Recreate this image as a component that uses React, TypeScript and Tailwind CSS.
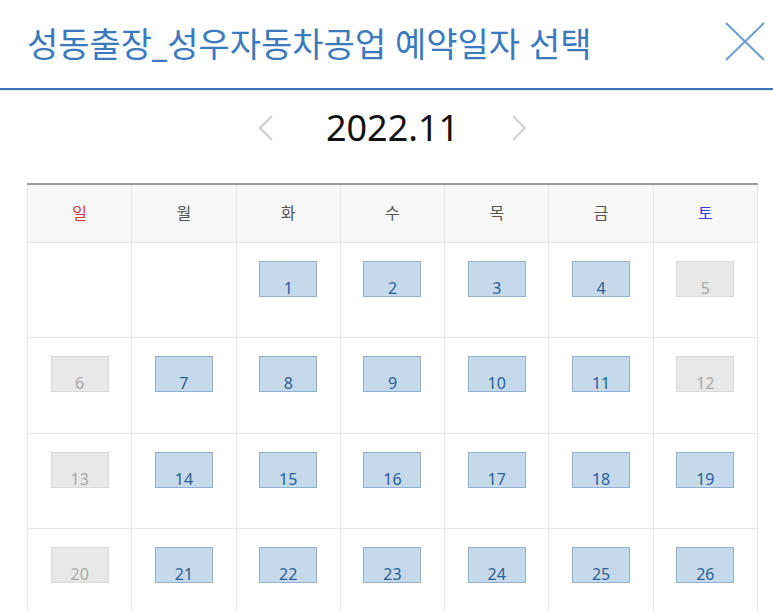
import React from "react";

const FONT = { fontFamily: '"Noto Sans", "Noto Sans CJK KR", sans-serif' };

const WEEKDAYS = ["일", "월", "화", "수", "목", "금", "토"];
const CLOSED = [5, 6, 12, 13, 20, 27];

// Nov 2022 starts on a Tuesday; only the weeks that fit the sheet are shown
function buildWeeks() {
  const cells: (number | null)[] = [null, null];
  for (let d = 1; d <= 30; d++) cells.push(d);
  while (cells.length % 7) cells.push(null);
  const weeks: (number | null)[][] = [];
  for (let i = 0; i < cells.length; i += 7) weeks.push(cells.slice(i, i + 7));
  return weeks.slice(0, 4);
}

export default function App() {
  const weeks = buildWeeks();

  return (
    <div className="h-screen overflow-hidden bg-white" style={FONT}>
      <header className="flex h-[90px] items-center justify-between border-b-2 border-[#3b78bb] pl-[27px] pr-[6px]">
        <h1 className="text-[34px] font-normal text-[#3a7abd]">성동출장_성우자동차공업 예약일자 선택</h1>
        <button className="mb-[4px] flex h-[44px] w-[44px] items-center justify-center">
          <svg width="42" height="40" viewBox="0 0 42 40" fill="none" stroke="#6c9fd3" strokeWidth="2">
            <path d="M2 1 L40 38 M40 1 L2 38" />
          </svg>
        </button>
      </header>
      <div className="h-px bg-[#dfe6ee]" />

      <div className="ml-[27px] w-[731px]">
        <div className="flex h-[92px] items-center justify-center gap-[52px] pb-[18px]">
          <svg width="16" height="26" viewBox="0 0 16 26" fill="none" stroke="#cfcfcf" strokeWidth="2">
            <path d="M14 1 L2 13 L14 25" />
          </svg>
          <span className="text-[36px] leading-none text-[#111]">2022.11</span>
          <svg width="16" height="26" viewBox="0 0 16 26" fill="none" stroke="#cfcfcf" strokeWidth="2">
            <path d="M2 1 L14 13 L2 25" />
          </svg>
        </div>

        <table className="w-full table-fixed border-collapse">
          <thead>
            <tr className="border-t-2 border-[#9a9a9a] bg-[#f7f7f7]">
              {WEEKDAYS.map((w, i) => (
                <th
                  key={w}
                  className={`h-[58px] border-x border-b border-[#e6e6e6] text-[16px] font-normal ${
                    i === 0 ? "text-[#d23b3b]" : i === 6 ? "text-[#3b3bd6]" : "text-[#555]"
                  }`}
                >
                  {w}
                </th>
              ))}
            </tr>
          </thead>
          <tbody>
            {weeks.map((week, wi) => (
              <tr key={wi}>
                {week.map((d, di) => (
                  <td key={di} className="h-[95.5px] border border-[#e6e6e6] pt-[18px] align-top">
                    {d !== null && (
                      <div
                        className={`mx-auto flex h-[36px] w-[58px] items-end justify-center border ${
                          CLOSED.includes(d)
                            ? "border-[#d9d9d9] bg-[#e8e8e8] text-[#a8a8a8]"
                            : "border-[#8fb2d3] bg-[#c5d9eb] text-[#2b5f96]"
                        }`}
                      >
                        <span className="text-[16px] leading-none">{d}</span>
                      </div>
                    )}
                  </td>
                ))}
              </tr>
            ))}
          </tbody>
        </table>
      </div>
    </div>
  );
}
